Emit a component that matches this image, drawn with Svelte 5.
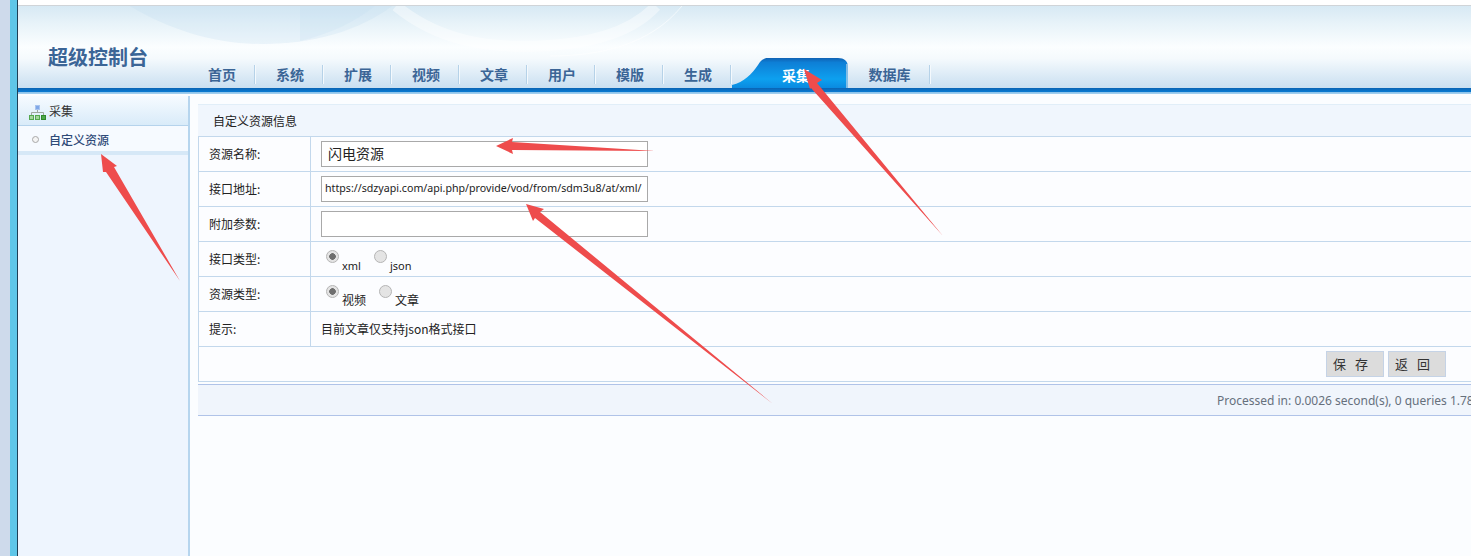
<script>
  const navLeft = ['首页', '系统', '扩展', '视频', '文章', '用户', '模版', '生成'];
  const rows = [
    { label: '资源名称:', value: '闪电资源', cls: 'big' },
    { label: '接口地址:', value: 'https://sdzyapi.com/api.php/provide/vod/from/sdm3u8/at/xml/', cls: 'url' },
    { label: '附加参数:', value: '', cls: '' }
  ];
  const radios = [
    { label: '接口类型:', name: 'api', opts: ['xml', 'json'], latin: true },
    { label: '资源类型:', name: 'res', opts: ['视频', '文章'], latin: false }
  ];
</script>

<div class="page">
  <div class="rail"></div>
  <div class="rail2"></div>
  <div class="main">
    <header class="head">
      <svg class="swoosh" width="840" height="60" viewBox="18 6 840 60">
        <path d="M130 6 C170 30 215 44 262 44 C315 44 360 30 392 6 Z" fill="#bfdcef" opacity="0.25" />
        <path d="M300 41 C330 34 355 22 375 6 L300 6 Z" fill="#bfdcef" opacity="0.2" />
        <path d="M396 6 C440 42 490 48 540 46 C590 44 632 32 656 6" stroke="#ffffff" stroke-width="11" opacity="0.42" fill="none" />
        <path d="M682 6 C650 45 600 56 550 56" stroke="#ffffff" stroke-width="1" opacity="0.6" fill="none" />
      </svg>
      <div class="brand">超级控制台</div>
      <nav class="nav">
        {#each navLeft as n}
          <a class="item">{n}</a>
        {/each}
        <a class="tab">
          <svg class="tabbg" width="117" height="31" viewBox="0 0 117 31">
            <defs>
              <linearGradient id="tg" x1="0" y1="0" x2="0" y2="1">
                <stop offset="0" stop-color="#0f62b4" />
                <stop offset="0.15" stop-color="#0e7fd6" />
                <stop offset="0.7" stop-color="#0da0ef" />
                <stop offset="1" stop-color="#0a8ae0" />
              </linearGradient>
            </defs>
            <path d="M0 30 V27 C12 24 20 16 26 7 C29 2 32 0 36 0 H106 C112 0 116 3 116 9 V30 Z" fill="url(#tg)" />
            <path d="M115 6 V30" stroke="#a9cbe6" stroke-width="1.5" fill="none" />
          </svg>
          <span>采集</span>
        </a>
        <a class="item last">数据库</a>
      </nav>
    </header>
    <div class="bar"></div>

    <div class="body">
      <aside class="side">
        <div class="side-head">
          <svg width="17" height="15" viewBox="0 0 17 15">
            <rect x="6.5" y="0.5" width="4" height="4" fill="#7fa8e8" stroke="#a8c4ee" />
            <path d="M8.5 5 V7.5 M2.5 10 V7.5 H14.5 V10" stroke="#a0a8a0" fill="none" />
            <rect x="0.5" y="10.5" width="4" height="4" fill="#a4d69c" stroke="#55a84f" />
            <rect x="6.5" y="10.5" width="4" height="4" fill="#a4d69c" stroke="#55a84f" />
            <rect x="12.5" y="10.5" width="4" height="4" fill="#4fa64a" stroke="#2f8a2a" />
          </svg>
          <span>采集</span>
        </div>
        <div class="side-item"><i></i><b>自定义资源</b></div>
        <div class="side-stripe"></div>
      </aside>

      <section class="content">
        <div class="panel-title">自定义资源信息</div>
        <div class="form">
          {#each rows as r}
            <div class="row">
              <div class="lab">{r.label}</div>
              <div class="val"><input class={r.cls} type="text" value={r.value} /></div>
            </div>
          {/each}
          {#each radios as r}
            <div class="row">
              <div class="lab">{r.label}</div>
              <div class="val radios">
                {#each r.opts as o, i}
                  <label class:latin={r.latin}><input type="radio" name={r.name} checked={i === 0} /><span>{o}</span></label>
                {/each}
              </div>
            </div>
          {/each}
          <div class="row">
            <div class="lab">提示:</div>
            <div class="val tip">目前文章仅支持json格式接口</div>
          </div>
          <div class="actions">
            <button>保 存</button>
            <button>返 回</button>
          </div>
        </div>
        <div class="foot">Processed in: 0.0026 second(s), 0 queries 1.78</div>
      </section>
    </div>
  </div>

  <svg class="arrows" width="1471" height="556" viewBox="0 0 1471 556">
    <g fill="#ee4c4c">
      <polygon points="804,69 822,80 817,83 943,236 811,88 810,89" />
      <polygon points="101,154 117,166 114,167 180,281 106,172 103,172" />
      <polygon points="496,146 513,138 512,142 655,151 512,150 513,154" />
      <polygon points="526,204 544,209 540,212 773,404 535,218 533,221" />
    </g>
  </svg>
</div>

<style>
  :global(body) { margin: 0; background: #fff; }
  .page {
    position: relative;
    display: flex;
    width: 1471px;
    height: 556px;
    overflow: hidden;
    font-family: "Noto Sans", "Noto Sans CJK SC", sans-serif;
    font-size: 12px;
    color: #222;
  }
  .rail { width: 10px; background: #cedaeb; flex: none; }
  .rail2 { width: 7px; background: #5fc6e8; border-right: 1px solid #1f3f55; flex: none; }
  .main { flex: 1; min-width: 0; display: flex; flex-direction: column; padding-top: 5px; background: #fff; }
  .head {
    position: relative;
    height: 83px;
    flex: none;
    overflow: hidden;
    border-top: 1px solid #d0d4d8;
    box-sizing: border-box;
    background: linear-gradient(#d7e9f4 0, #e8f3f9 22%, #fbfeff 50%, #f5fafd 64%, #c9dff1 100%);
  }
  .swoosh { position: absolute; left: 0; top: 0; }
  .brand {
    position: absolute;
    left: 30px;
    top: 37px;
    font: bold 20px/28px "Noto Sans CJK SC", sans-serif;
    color: #3b6596;
  }
  .nav {
    position: absolute;
    left: 169px;
    bottom: 0;
    height: 30px;
    display: flex;
    align-items: flex-end;
  }
  .item {
    position: relative;
    width: 68px;
    height: 30px;
    box-sizing: border-box;
    padding-left: 2px;
    text-align: center;
    font: bold 14px/32px "Noto Sans CJK SC", sans-serif;
    color: #3b6596;
  }
  .item::after {
    content: "";
    position: absolute;
    right: 0;
    top: 7px;
    height: 19px;
    width: 1px;
    background: #b6d2e8;
    box-shadow: 1px 0 0 #f4f9fd;
  }
  .item.last { width: 81px; padding-left: 0; }
  .tab {
    position: relative;
    width: 117px;
    height: 30px;
    box-sizing: border-box;
    padding-left: 11px;
    margin-left: 1px;
    text-align: center;
    font: bold 14px/34px "Noto Sans CJK SC", sans-serif;
    color: #fff;
  }
  .tabbg { position: absolute; left: 0; top: 0; }
  .tab span { position: relative; }
  .bar {
    height: 6px;
    flex: none;
    background: linear-gradient(#0a64b4 0, #0a78cf 60%, #7fbde8 60%, #a9d2f0 100%);
  }
  .body { flex: 1; display: flex; min-height: 0; background: #fbfdff; padding-top: 2px; }
  .side {
    width: 170px;
    flex: none;
    background: #eef5fe;
    border-right: 2px solid #b6d5ee;
  }
  .side-head {
    height: 29px;
    display: flex;
    align-items: center;
    gap: 3px;
    padding-left: 11px;
    background: linear-gradient(#f6fbff, #d9ebf9);
    border-bottom: 1px solid #b5d3ec;
    font: 12px "Noto Sans CJK SC", sans-serif;
    color: #333;
  }
  .side-head svg { margin-top: 3px; }
  .side-item {
    height: 25px;
    display: flex;
    align-items: center;
    padding: 1px 0 0 15px;
    box-sizing: border-box;
    background: #f6faff;
    font: 12px "Noto Sans CJK SC", sans-serif;
    color: #2e4a78;
  }
  .side-item i {
    width: 5px;
    height: 5px;
    border: 1px solid #a8a8a8;
    border-radius: 50%;
    background: #f4f4f4;
    margin-right: 10px;
    margin-left: -1px;
  }
  .side-item b { font-weight: 500; }
  .side-stripe { height: 4px; background: #d6e8f7; }
  .content { flex: 1; min-width: 0; padding: 8px 0 0 8px; overflow: hidden; }
  .panel-title {
    height: 32px;
    box-sizing: border-box;
    border-top: 1px solid #e1eef8;
    background: #f0f6fd;
    padding-left: 15px;
    font: 12px/31px "Noto Sans CJK SC", sans-serif;
    color: #222;
  }
  .form {
    border-top: 1px solid #c3d8ec;
    border-left: 1px solid #c3d8ec;
    border-bottom: 1px solid #c3d8ec;
    background: #fcfdff;
  }
  .row {
    display: flex;
    height: 35px;
    box-sizing: border-box;
    border-bottom: 1px solid #c3d8ec;
  }
  .lab {
    width: 112px;
    flex: none;
    box-sizing: border-box;
    border-right: 1px solid #c3d8ec;
    padding-left: 10px;
    font: 12px/34px "Noto Sans CJK SC", sans-serif;
    color: #222;
  }
  .val { flex: 1; padding-left: 10px; display: flex; align-items: center; }
  .val input[type="text"] {
    width: 327px;
    height: 26px;
    box-sizing: border-box;
    border: 1px solid #a9a9a9;
    background: #fff;
    padding: 0 4px;
    margin: 0;
    outline: none;
    color: #222;
  }
  .val input.big { font: 14px "Noto Sans CJK SC", sans-serif; padding: 0 0 3px 6px; }
  .val input.url { font: 10.65px "Noto Sans", sans-serif; padding: 0 3px 2px; }
  .radios { align-items: flex-start; padding-top: 8px; gap: 13px; padding-left: 15px; }
  .radios label { display: flex; align-items: flex-start; font: 12px "Noto Sans", "Noto Sans CJK SC", sans-serif; color: #222; }
  .radios label.latin { font-size: 11px; }
  .radios input {
    appearance: none;
    width: 13px;
    height: 13px;
    margin: 0 3px 0 0;
    border-radius: 50%;
    border: 1px solid #b5b5b5;
    box-sizing: border-box;
    background: #e4e4e4;
  }
  .radios input:checked { background: radial-gradient(circle, #6e6e6e 0 3px, #e4e4e4 3.6px); }
  .radios span { margin-top: 9px; line-height: 14px; }
  .tip { font: 12px "Noto Sans CJK SC", "Noto Sans", sans-serif; color: #222; padding-bottom: 2px; }
  .actions {
    height: 34px;
    display: flex;
    justify-content: flex-end;
    align-items: flex-start;
    gap: 4px;
    padding: 4px 25px 0 0;
    box-sizing: border-box;
  }
  .actions button {
    width: 58px;
    height: 26px;
    padding: 0 0 1px 6px;
    text-align: left;
    background: #dcdcdc;
    border: 1px solid #c5d3e6;
    font: 13px "Noto Sans CJK SC", sans-serif;
    color: #333;
    word-spacing: 6px;
  }
  .foot {
    margin-top: 2px;
    height: 32px;
    box-sizing: border-box;
    border-top: 1px solid #b0c3e8;
    border-bottom: 1px solid #b0c3e8;
    background: #f0f5fc;
    padding-left: 1019px;
    white-space: nowrap;
    font: 12px/31px "Noto Sans", sans-serif;
    color: #66707c;
  }
  .arrows { position: absolute; left: 0; top: 0; pointer-events: none; }
</style>
